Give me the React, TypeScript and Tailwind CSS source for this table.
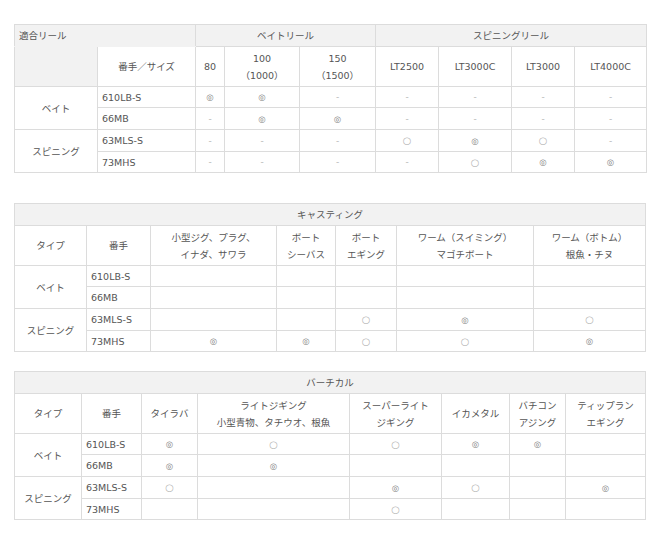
import React from "react";

type Mark = "◎" | "○" | "-" | "";

const font = "font-['DejaVu_Sans','Noto_Sans_CJK_JP',sans-serif]";

function Sym({ v }: { v: Mark }) {
  if (v === "◎") return <span className="text-[8.5px] text-[#808080]">◎</span>;
  if (v === "○") return <span className="text-[10px] text-[#b5b5b5]">○</span>;
  if (v === "-") return <span className="text-[9px] text-[#b8b8b8]">-</span>;
  return null;
}

const cell = "border border-[#dcdcdc] p-0 leading-[17px] text-center align-middle font-normal";
const gray = "bg-[#f2f2f2]";
// row heights of the body, alternating like the source page
const rowH = ["h-[21px]", "h-[22px]", "h-[22px]", "h-[21px]"];

function Lines({ text }: { text: string }) {
  const parts = text.split("\n");
  return (
    <>
      {parts.map((p, i) => (
        <div key={i}>{p}</div>
      ))}
    </>
  );
}

type Row = { model: string; marks: Mark[] };
type Group = { type: string; rows: Row[] };

function Body({ groups }: { groups: Group[] }) {
  let n = 0;
  return (
    <tbody>
      {groups.map((g) =>
        g.rows.map((r, i) => (
          <tr key={g.type + r.model} className={rowH[n++ % 4]}>
            {i === 0 && (
              <td rowSpan={g.rows.length} className={cell}>
                {g.type}
              </td>
            )}
            <td className={`${cell} !text-left pl-[4px]`}>{r.model}</td>
            {r.marks.map((m, j) => (
              <td key={j} className={cell}>
                <Sym v={m} />
              </td>
            ))}
          </tr>
        ))
      )}
    </tbody>
  );
}

function Cols({ widths }: { widths: number[] }) {
  return (
    <colgroup>
      {widths.map((w, i) => (
        <col key={i} style={{ width: w }} />
      ))}
    </colgroup>
  );
}

const reelGroups: Group[] = [
  {
    type: "ベイト",
    rows: [
      { model: "610LB-S", marks: ["◎", "◎", "-", "-", "-", "-", "-"] },
      { model: "66MB", marks: ["-", "◎", "◎", "-", "-", "-", "-"] },
    ],
  },
  {
    type: "スピニング",
    rows: [
      { model: "63MLS-S", marks: ["-", "-", "-", "○", "◎", "○", "-"] },
      { model: "73MHS", marks: ["-", "-", "-", "-", "○", "◎", "◎"] },
    ],
  },
];

const castGroups: Group[] = [
  {
    type: "ベイト",
    rows: [
      { model: "610LB-S", marks: ["", "", "", "", ""] },
      { model: "66MB", marks: ["", "", "", "", ""] },
    ],
  },
  {
    type: "スピニング",
    rows: [
      { model: "63MLS-S", marks: ["", "", "○", "◎", "○"] },
      { model: "73MHS", marks: ["◎", "◎", "○", "○", "◎"] },
    ],
  },
];

const vertGroups: Group[] = [
  {
    type: "ベイト",
    rows: [
      { model: "610LB-S", marks: ["◎", "○", "○", "◎", "◎", ""] },
      { model: "66MB", marks: ["◎", "◎", "", "", "", ""] },
    ],
  },
  {
    type: "スピニング",
    rows: [
      { model: "63MLS-S", marks: ["○", "", "◎", "○", "", "◎"] },
      { model: "73MHS", marks: ["", "", "○", "", "", ""] },
    ],
  },
];

function UseTable({
  title,
  widths,
  heads,
  groups,
  className,
}: {
  title: string;
  widths: number[];
  heads: string[];
  groups: Group[];
  className?: string;
}) {
  return (
    <table className={`table-fixed border-collapse w-[631px] ${className ?? ""}`}>
      <Cols widths={widths} />
      <thead>
        <tr className="h-[22px]">
          <th colSpan={widths.length} className={`${cell} ${gray}`}>
            {title}
          </th>
        </tr>
        <tr className="h-[40px]">
          {heads.map((h) => (
            <th key={h} className={cell}>
              <Lines text={h} />
            </th>
          ))}
        </tr>
      </thead>
      <Body groups={groups} />
    </table>
  );
}

export default function App() {
  return (
    <div className={`bg-white w-[661px] min-h-[543px] pt-[24px] pl-[14px] text-[9.5px] text-[#555] ${font}`}>
      <table className="table-fixed border-collapse w-[632px]">
        <Cols widths={[83, 98, 29, 75, 76, 63, 73, 63, 72]} />
        <thead>
          <tr className="h-[22px]">
            <th colSpan={2} className={`${cell} ${gray} !text-left pl-[4px] border-b-[#f2f2f2]`}>
              適合リール
            </th>
            <th colSpan={3} className={`${cell} ${gray}`}>
              ベイトリール
            </th>
            <th colSpan={4} className={`${cell} ${gray}`}>
              スピニングリール
            </th>
          </tr>
          <tr className="h-[40px]">
            <th className={`${cell} ${gray} border-t-[#f2f2f2]`}></th>
            <th className={cell}>番手／サイズ</th>
            <th className={cell}>80</th>
            <th className={cell}>
              <Lines text={"100\n（1000）"} />
            </th>
            <th className={cell}>
              <Lines text={"150\n（1500）"} />
            </th>
            <th className={cell}>LT2500</th>
            <th className={cell}>LT3000C</th>
            <th className={cell}>LT3000</th>
            <th className={cell}>LT4000C</th>
          </tr>
        </thead>
        <Body groups={reelGroups} />
      </table>

      <UseTable
        className="mt-[30px]"
        title="キャスティング"
        widths={[72, 64, 126, 59, 61, 137, 112]}
        heads={[
          "タイプ",
          "番手",
          "小型ジグ、プラグ、\nイナダ、サワラ",
          "ボート\nシーバス",
          "ボート\nエギング",
          "ワーム（スイミング）\nマゴチボート",
          "ワーム（ボトム）\n根魚・チヌ",
        ]}
        groups={castGroups}
      />

      <UseTable
        className="mt-[19px]"
        title="バーチカル"
        widths={[67, 60, 56, 152, 92, 68, 56, 80]}
        heads={[
          "タイプ",
          "番手",
          "タイラバ",
          "ライトジギング\n小型青物、タチウオ、根魚",
          "スーパーライト\nジギング",
          "イカメタル",
          "バチコン\nアジング",
          "ティップラン\nエギング",
        ]}
        groups={vertGroups}
      />
    </div>
  );
}
